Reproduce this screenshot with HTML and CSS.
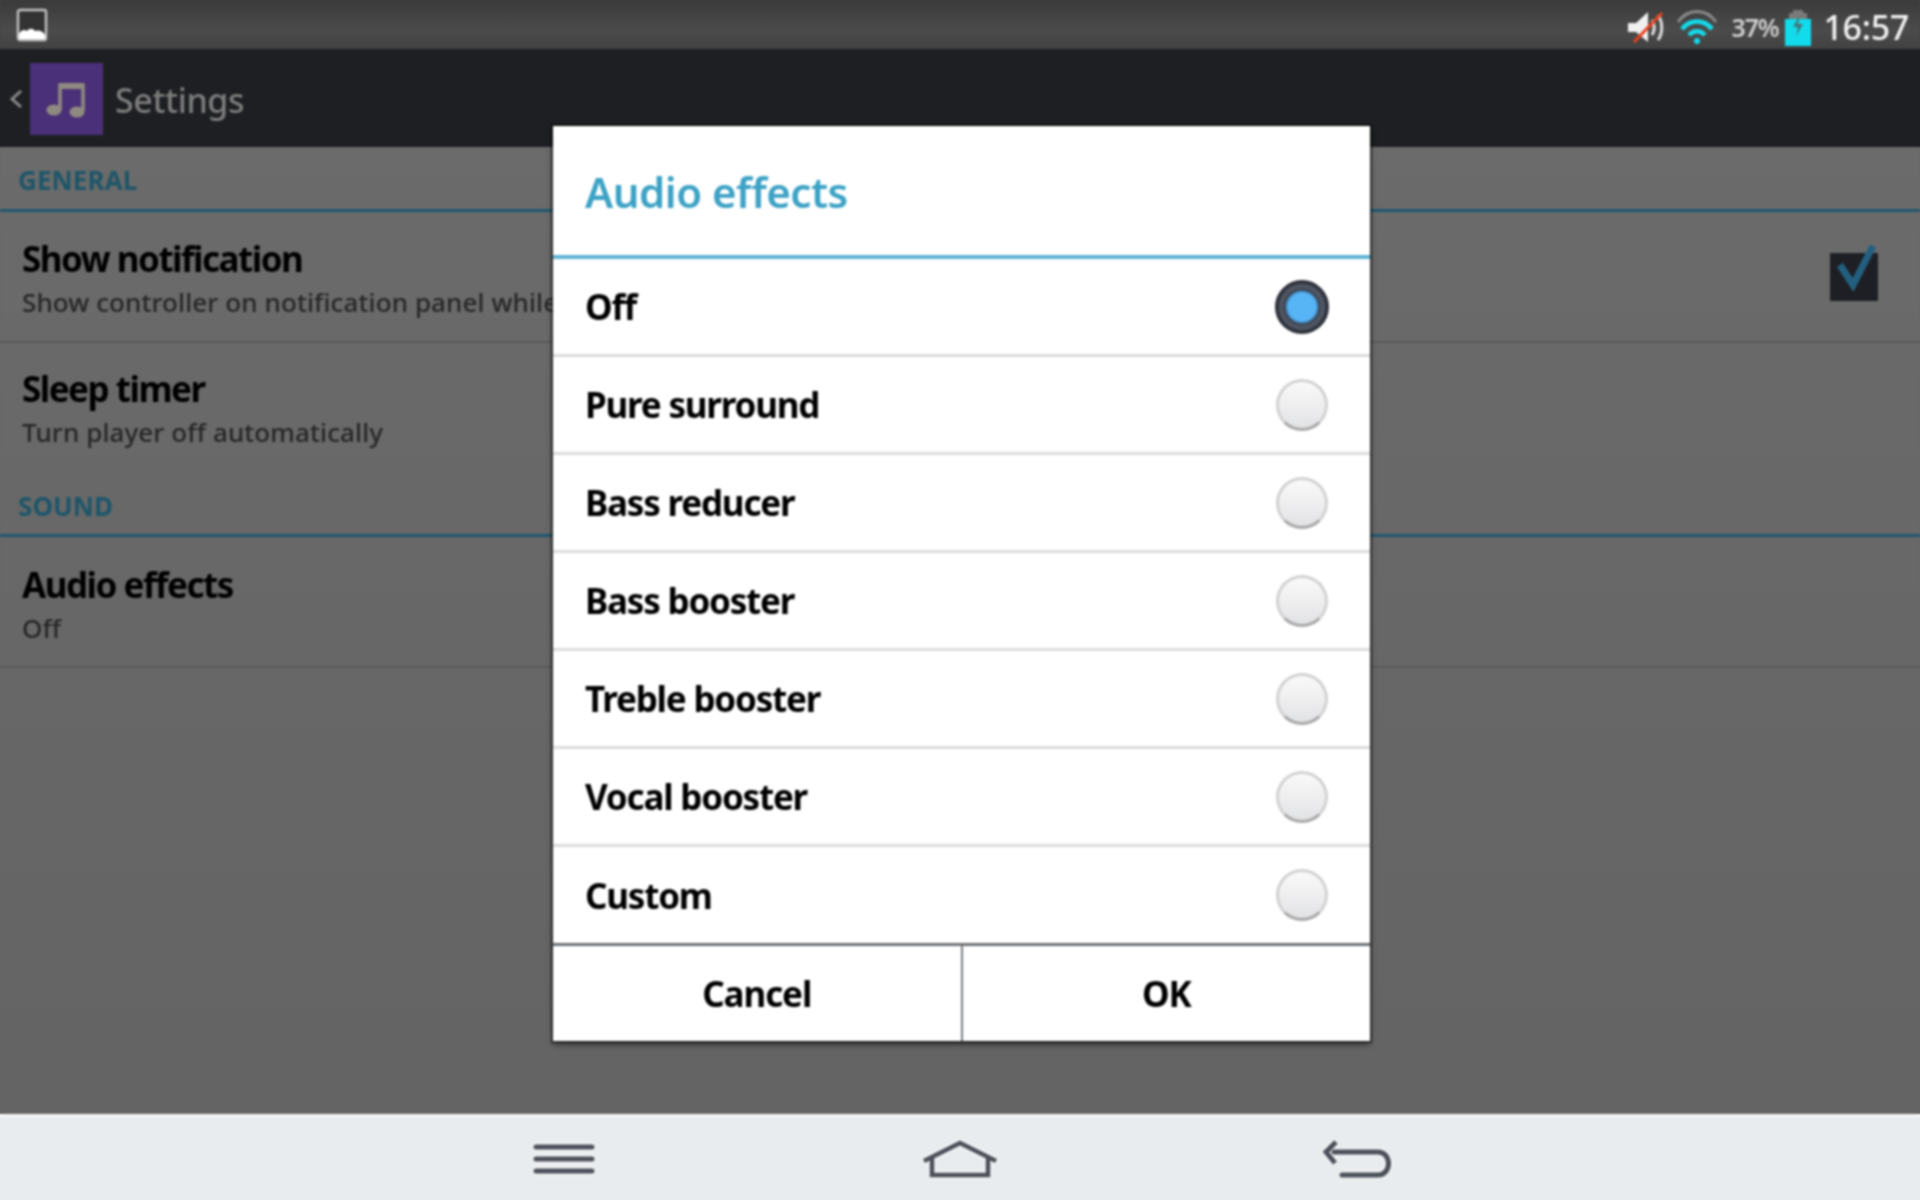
FILE: index.html
```html
<!DOCTYPE html>
<html lang="en">
<head>
<meta charset="utf-8">
<title>Audio effects</title>
<link rel="stylesheet" href="styles.css">
</head>
<body>
<div class="screen">
  <header class="status">
    <svg class="st-image" viewBox="0 0 32 34"><rect x="2" y="2" width="28" height="30" rx="2" fill="#333" stroke="#c4c4c4" stroke-width="2.4"/><path d="M3 31v-5c2-4 5-5 8-3 2-3 6-3 8 0 3-1 7-1 10 4v4z" fill="#fff"/></svg>
    <div class="status-right">
      <svg class="st-sound" viewBox="0 0 40 32"><path d="M0 12h8L20 1v30L8 21H0z" fill="#f0f0f0"/><path d="M24 9c3 5 3 10 0 15M30 4c5 7 5 18 0 25" fill="none" stroke="#dedede" stroke-width="3"/><path d="M6 31 34 2" stroke="#e8401c" stroke-width="3"/></svg>
      <svg class="st-wifi" viewBox="0 0 40 34"><path d="M1 12C11 -2 29 -2 39 12" fill="none" stroke="#8b8b8b" stroke-width="3"/><path d="M5 19C13 9 27 9 35 19" fill="none" stroke="#12dcec" stroke-width="4.500"/><path d="M12 25c5-5 11-5 16 0" fill="none" stroke="#12dcec" stroke-width="4.500"/><circle cx="20" cy="31" r="3" fill="#12dcec"/></svg>
      <span class="pct">37%</span>
      <svg class="st-batt" viewBox="0 0 26 38"><path d="M8 5V2h10v3h4v6H4V5z" fill="#7a7a7a"/><rect x="0" y="11" width="26" height="27" fill="#12dcec"/><path d="M15 7 8 19h5l-2 9 7-12h-5z" fill="#4a7378"/></svg>
      <span class="clock">16:57</span>
    </div>
  </header>
  <div class="actionbar">
    <svg class="ab-back" viewBox="0 0 16 22"><path d="M13 3 4 11l9 8" fill="none" stroke="#8a8a8a" stroke-width="3"/></svg>
    <div class="app-icon">
      <svg viewBox="0 0 42 42"><path d="M14 32V7h23v26" fill="none" stroke="#8f8a80" stroke-width="3.600"/><path d="M14 5h23v6H14z" fill="#8f8a80"/><ellipse cx="8" cy="32" rx="7.500" ry="5.500" fill="#8f8a80"/><ellipse cx="31" cy="34" rx="7.500" ry="5.500" fill="#8f8a80"/></svg>
    </div>
    <span class="ab-title">Settings</span>
  </div>
  <main class="content">
    <h2 class="section section-first">GENERAL</h2>
    <div class="pref pref-check">
      <div class="pref-text">
        <div class="pref-title">Show notification</div>
        <div class="pref-sub">Show controller on notification panel while</div>
      </div>
      <svg class="check" viewBox="0 0 50 56"><rect x="1" y="8" width="48" height="48" fill="#1d1f24"/><path d="M11 20l13 20L44 1" fill="none" stroke="#23607f" stroke-width="7"/></svg>
    </div>
    <div class="pref pref-last">
      <div class="pref-title">Sleep timer</div>
      <div class="pref-sub">Turn player off automatically</div>
    </div>
    <h2 class="section">SOUND</h2>
    <div class="pref pref-audio">
      <div class="pref-title">Audio effects</div>
      <div class="pref-sub">Off</div>
    </div>
  </main>
  <nav class="navbar">
    <svg class="nav-menu" viewBox="0 0 64 38"><path d="M4 7h56M4 19h56M4 31h56" stroke="#4b4f58" stroke-width="5" stroke-linecap="round"/></svg>
    <svg class="nav-home" viewBox="0 0 78 38"><path d="M3 21 39 3l36 18" fill="none" stroke="#4b4f58" stroke-width="4.500"/><path d="M11 18v17h56V18" fill="none" stroke="#4b4f58" stroke-width="4.500"/></svg>
    <svg class="nav-back" viewBox="0 0 70 42"><path d="M12 14h44c14 0 14 23 0 23H20" fill="none" stroke="#4b4f58" stroke-width="5" stroke-linecap="round"/><path d="M14 4 4 14l9 11" fill="none" stroke="#4b4f58" stroke-width="5"/></svg>
  </nav>
  <section class="dialog">
    <h1 class="dlg-title">Audio effects</h1>
    <ul class="options">
      <li class="option"><span>Off</span><i class="radio radio-on"></i></li>
      <li class="option"><span>Pure surround</span><i class="radio"></i></li>
      <li class="option"><span>Bass reducer</span><i class="radio"></i></li>
      <li class="option"><span>Bass booster</span><i class="radio"></i></li>
      <li class="option"><span>Treble booster</span><i class="radio"></i></li>
      <li class="option"><span>Vocal booster</span><i class="radio"></i></li>
      <li class="option"><span>Custom</span><i class="radio"></i></li>
    </ul>
    <div class="buttons">
      <div class="btn">Cancel</div>
      <div class="btn">OK</div>
    </div>
  </section>
</div>
</body>
</html>
```
FILE: styles.css
```css
* { box-sizing: border-box; }
html, body { margin: 0; padding: 0; }
body { width: 1920px; height: 1200px; overflow: hidden; background: linear-gradient(#444 0 49px, #1e1f22 49px 147px, #686868 147px 1114px, #e9ecee 1114px); font-family: "Noto Sans", "Open Sans", sans-serif; }
.screen { position: relative; width: 1920px; height: 1200px; display: flex; flex-direction: column; filter: blur(0.8px); }

.status { height: 49px; flex: none; display: flex; align-items: center; justify-content: space-between; padding: 0 11px 0 16px; background: linear-gradient(#3a3a3a, #4b4b4b 60%, #424242); }
.st-image { width: 32px; height: 34px; }
.status-right { display: flex; align-items: center; padding-top: 4px; }
.st-sound { width: 40px; height: 32px; margin-right: 9px; }
.st-wifi { width: 40px; height: 34px; margin-right: 15px; }
.pct { font-size: 25px; font-weight: 600; color: #cfcfcf; letter-spacing: -1.2px; margin-right: 7px; }
.st-batt { width: 26px; height: 38px; margin-right: 12px; }
.clock { font-size: 34px; color: #f2f2f2; font-weight: 500; letter-spacing: -0.3px; }

.actionbar { height: 98px; flex: none; display: flex; align-items: center; background: #1e1f22; padding: 1px 0 0 8px; }
.ab-back { width: 16px; height: 22px; margin-right: 6px; }
.app-icon { width: 73px; height: 72px; background: #4a3078; display: flex; align-items: center; justify-content: center; margin-right: 12px; }
.app-icon svg { width: 42px; height: 42px; }
.ab-title { font-size: 34px; color: #7d7d7d; font-weight: 500; letter-spacing: -0.4px; padding-top: 3px; }

.content { flex: 1; background: linear-gradient(#6b6b6b, #646464); }
.section { margin: 0; height: 64px; padding: 0 0 0 18px; border-bottom: 3px solid #1f5870; font-size: 26px; line-height: 66px; font-weight: 700; color: #1d5669; letter-spacing: 0.1px; }
.section-first { height: 65px; }
.pref { height: 130px; padding: 25px 22px 0; border-bottom: 2px solid #5a5a5a; }
.pref-check { display: flex; justify-content: space-between; align-items: flex-start; height: 131px; }
.pref-last { border-bottom: 0; height: 130px; padding-top: 24px; }
.pref-audio { height: 131px; padding-top: 26px; }
.pref-title { font-size: 35px; line-height: 44px; font-weight: 700; color: #000; letter-spacing: -1.5px; white-space: nowrap; }
.pref-sub { font-size: 26px; line-height: 42px; font-weight: 500; color: #262626; white-space: nowrap; letter-spacing: 0.1px; }
.check { width: 50px; height: 56px; margin: 8px 19px 0 0; }

.navbar { height: 86px; flex: none; display: flex; align-items: center; padding-left: 532px; background: #e9ecee; border-top: 3px solid #f6f7f8; }
.nav-menu, .nav-home, .nav-back { filter: drop-shadow(0 0 2px #fff); }
.nav-menu { width: 64px; height: 38px; margin-right: 325px; }
.nav-home { width: 78px; height: 38px; margin-right: 323px; }
.nav-back { width: 70px; height: 42px; }

.dialog { position: absolute; left: 553px; top: 126px; width: 817px; height: 915px; background: #fff; display: flex; flex-direction: column; box-shadow: 0 0 0 2px rgba(0,0,0,.4), 0 3px 6px rgba(0,0,0,.6); }
.dlg-title { margin: 0; height: 133px; padding: 0 0 0 32px; flex: none; border-bottom: 4px solid #5fb4d2; font-size: 42px; line-height: 132px; font-weight: 600; color: #3ca2c5; letter-spacing: -0.5px; }
.options { list-style: none; margin: 0; padding: 0; }
.option { height: 98px; padding: 0 42px 0 32px; display: flex; align-items: center; justify-content: space-between; border-bottom: 3px solid #dcdcdc; font-size: 35px; font-weight: 700; color: #000; letter-spacing: -1.2px; }
.option:last-child { height: 99px; border-bottom-color: #6e7275; }
.radio { width: 52px; height: 52px; border-radius: 50%; background: linear-gradient(#fafafa, #e2e3e5); border: 3px solid #d2d2d2; border-bottom-color: #a8a8a8; }
.radio-on { width: 54px; height: 54px; margin-right: -1px; background: radial-gradient(circle, #58b5f5 0 13px, #4a9fe0 15px, #3b4350 17px, #565c69 21px, #2b2f38 25px); border: 2px solid #2b2f38; }
.buttons { flex: 1; display: flex; }
.btn { flex: 1; display: flex; align-items: center; justify-content: center; font-size: 35px; font-weight: 700; color: #000; letter-spacing: -1.1px; }
.btn + .btn { border-left: 2px solid #777b7e; }
```
